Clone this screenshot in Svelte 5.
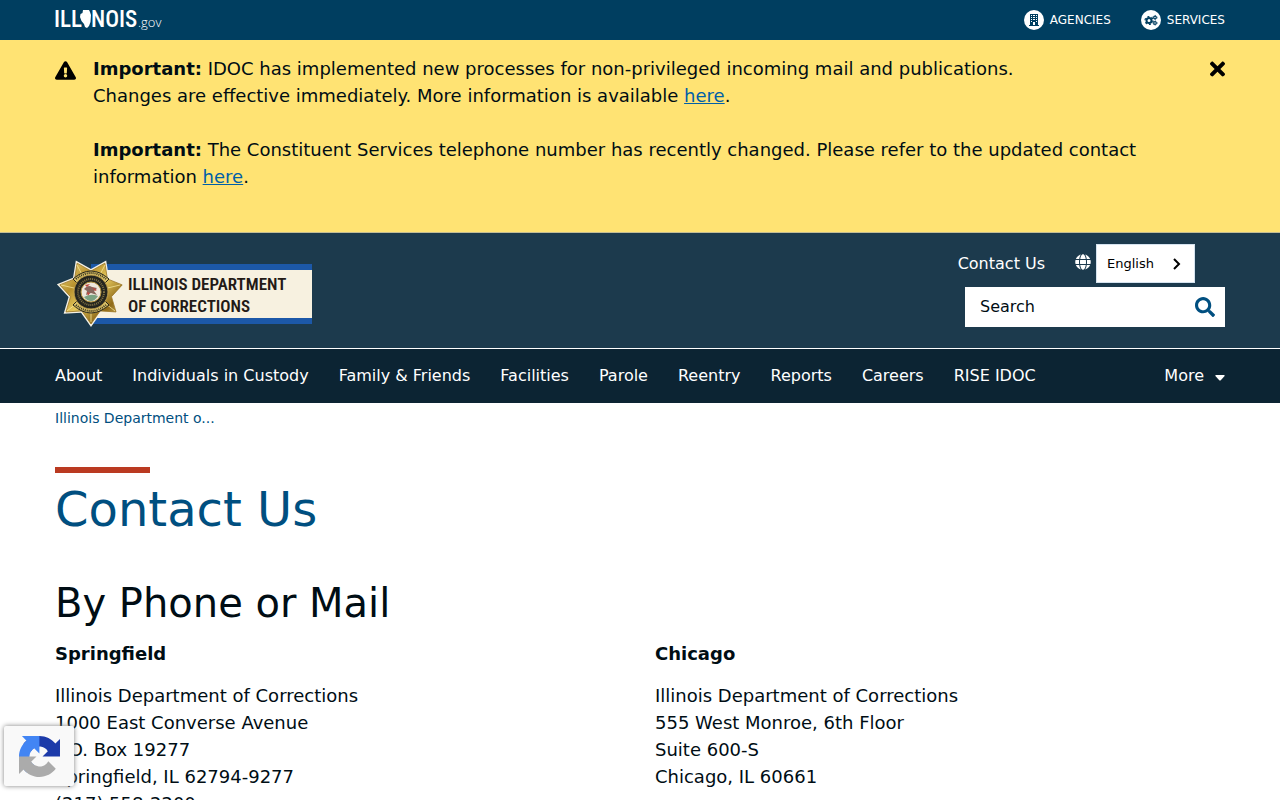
<script>
  let alertOpen = $state(true);
  let query = $state('');

  const navItems = [
    'About',
    'Individuals in Custody',
    'Family & Friends',
    'Facilities',
    'Parole',
    'Reentry',
    'Reports',
    'Careers',
    'RISE IDOC'
  ];

  const offices = [
    {
      city: 'Springfield',
      lines: [
        'Illinois Department of Corrections',
        '1000 East Converse Avenue',
        'P.O. Box 19277',
        'Springfield, IL 62794-9277',
        '(217) 558-2200'
      ]
    },
    {
      city: 'Chicago',
      lines: [
        'Illinois Department of Corrections',
        '555 West Monroe, 6th Floor',
        'Suite 600-S',
        'Chicago, IL 60661'
      ]
    }
  ];

  // seven-pointed sheriff's star around (36, 32)
  function starPoints(outer, inner) {
    const points = [];
    for (let i = 0; i < 14; i++) {
      const radius = i % 2 === 0 ? outer : inner;
      const angle = Math.PI / 2 + (i * Math.PI) / 7;
      points.push(`${36 + radius * Math.cos(angle)},${32 + radius * Math.sin(angle)}`);
    }
    return points.join(' ');
  }
</script>

<div class="topbar">
  <div class="container topbar-inner">
    <a class="state-logo" href="#illinois" aria-label="Illinois.gov">
      <svg width="110" height="30" viewBox="0 0 110 30" fill="#fff">
        <text class="state-name" x="-1" y="22">ILL</text>
        <path d="M28 5h6l1 2 1 3-.5 7-1.500 4-2 2-2-1-1-3-2.500-3-1.500-4 .500-3 2-1z" />
        <text class="state-name" x="36" y="22">NOIS</text>
        <text class="state-gov" x="83" y="22">.gov</text>
      </svg>
    </a>
    <div class="top-links">
      <a href="#agencies">
        <svg width="20" height="20" viewBox="0 0 20 20">
          <circle cx="10" cy="10" r="10" fill="#fff" />
          <path
            fill="#003e60"
            fill-rule="evenodd"
            d="M6 4h8v11h1v1H5v-1h1zM7 5v1h1V5zm2 0v1h2V5zm3 0v1h1V5zM7 7v1h1V7zm2 0v1h2V7zm3 0v1h1V7zM7 9v1h1V9zm2 0v1h2V9zm3 0v1h1V9zM7 11v1h1v-1zm5 0v1h1v-1zM9 12v3h2v-3z"
          />
        </svg>
        AGENCIES
      </a>
      <a href="#services">
        <svg width="20" height="20" viewBox="0 0 20 20">
          <circle cx="10" cy="10" r="10" fill="#fff" />
          <g fill="none" stroke="#003e60">
            <circle cx="8" cy="10.500" r="2.500" stroke-width="2" />
            <circle cx="8" cy="10.500" r="4" stroke-width="1.200" stroke-dasharray="2 2.190" />
            <circle cx="14" cy="7.500" r="1.300" stroke-width="1.200" />
            <circle cx="14" cy="7.500" r="2.100" stroke-width=".7" stroke-dasharray="1.100 1.100" />
            <circle cx="14" cy="13" r="1.300" stroke-width="1.200" />
            <circle cx="14" cy="13" r="2.100" stroke-width=".7" stroke-dasharray="1.100 1.100" />
          </g>
        </svg>
        SERVICES
      </a>
    </div>
  </div>
</div>

{#if alertOpen}
  <div class="alert" role="alert">
    <div class="container alert-inner">
      <svg class="alert-icon" width="21" height="19" viewBox="0 0 576 512">
        <path d="M569.517 440.013C587.975 472.007 564.806 512 527.94 512H48.054c-36.937 0-59.999-40.055-41.577-71.987L246.423 23.985c18.467-32.009 64.72-31.951 83.154 0l239.94 416.028zM288 354c-25.405 0-46 20.595-46 46s20.595 46 46 46 46-20.595 46-46-20.595-46-46-46zm-43.673-165.346l7.418 136c.347 6.364 5.609 11.346 11.982 11.346h48.546c6.373 0 11.635-4.982 11.982-11.346l7.418-136c.375-6.874-5.098-12.654-11.982-12.654h-63.383c-6.884 0-12.356 5.78-11.981 12.654z" />
      </svg>
      <div class="alert-text">
        <p>
          <strong>Important:</strong> IDOC has implemented new processes for non-privileged incoming mail and publications.<br />
          Changes are effective immediately. More information is available <a href="#mail">here</a>.
        </p>
        <p>
          <strong>Important:</strong> The Constituent Services telephone number has recently changed. Please refer to the updated contact
          information <a href="#phone">here</a>.
        </p>
      </div>
      <button class="alert-close" aria-label="Close alert" onclick={() => (alertOpen = false)}>
        <svg width="15" height="22" viewBox="0 0 352 512">
          <path d="M242.72 256l100.07-100.07c12.28-12.28 12.28-32.19 0-44.48l-22.24-22.24c-12.28-12.28-32.19-12.28-44.48 0L176 189.28 75.93 89.21c-12.28-12.28-32.19-12.28-44.48 0L9.21 111.45c-12.28 12.28-12.28 32.19 0 44.48L109.28 256 9.21 356.07c-12.28 12.28-12.28 32.19 0 44.48l22.24 22.24c12.28 12.28 32.2 12.28 44.48 0L176 322.72l100.07 100.07c12.28 12.28 32.2 12.28 44.48 0l22.24-22.24c12.28-12.28 12.28-32.19 0-44.48L242.72 256z" />
        </svg>
      </button>
    </div>
  </div>
{/if}

<header class="header">
  <div class="container header-inner">
    <a class="agency-logo" href="#home" aria-label="Illinois Department of Corrections">
      <svg width="257" height="68" viewBox="0 0 257 68">
        <defs>
          <linearGradient id="gold" x1="0" y1="0" x2="1" y2="1">
            <stop offset="0" stop-color="#f3e08a" />
            <stop offset=".3" stop-color="#b8912c" />
            <stop offset=".5" stop-color="#e6c95e" />
            <stop offset=".75" stop-color="#8f6a18" />
            <stop offset="1" stop-color="#e8d27a" />
          </linearGradient>
        </defs>
        <rect x="36" y="4" width="221" height="60" fill="#1c58a8" />
        <rect x="36" y="10" width="221" height="48" fill="#f7f1e0" />
        <polygon points={starPoints(35, 23)} fill="#f5f1e4" />
        <polygon points={starPoints(32, 21)} fill="url(#gold)" stroke="#9c7624" stroke-width=".8" />
        <g stroke="#fff0a6" stroke-width="1" opacity=".7">
          <path d="M36 32L22 5M36 32L50 5M36 32L6 25M36 32L65 25M36 32L12 51M36 32L60 51M36 32V62" />
        </g>
        <path d="M18 19Q36 3 54 19L50 23Q36 11 22 23z" fill="#d9c168" stroke="#28261b" />
        <path d="M18 45Q36 61 54 45L50 41Q36 53 22 41z" fill="#d9c168" stroke="#28261b" />
        <path d="M21 19Q36 7 51 19M21 45Q36 57 51 45" fill="none" stroke="#332d19" stroke-width="2" stroke-dasharray="1 1" />
        <circle cx="36" cy="32" r="17" fill="#24251f" stroke="#c0a04c" />
        <circle cx="36" cy="32" r="13" fill="none" stroke="#827344" stroke-width="2" stroke-dasharray="1 1" />
        <circle cx="36" cy="32" r="10" fill="#eee7dc" stroke="#b6953f" />
        <path d="M29 29q4-5 8-2l5 1-3 3 3 4-6-2-5 2 1-4z" fill="#86665d" />
        <path d="M30 25l5-1-3 3zM37 27l5 3-2 1zM32 32l3 1-2 3z" fill="#c4463e" />
        <path d="M29 37q7-4 14-1-3 5-7 5-4 0-7-4z" fill="#7ba283" />
        <text class="agency-name" x="73" y="30">ILLINOIS DEPARTMENT</text>
        <text class="agency-name" x="73" y="52">OF CORRECTIONS</text>
      </svg>
    </a>
    <div class="header-tools">
      <div class="header-links">
        <a href="#contact">Contact Us</a>
        <div class="language">
          <svg width="16" height="16" viewBox="0 0 496 512" fill="#fff">
            <path d="M336.5 160C322 70.7 287.8 8 248 8s-74 62.7-88.5 152h177zM152 256c0 22.2 1.2 43.5 3.3 64h185.3c2.1-20.5 3.3-41.8 3.3-64s-1.2-43.5-3.3-64H155.3c-2.1 20.5-3.3 41.8-3.3 64zm324.7-96c-28.6-67.9-86.5-120.4-158-141.6 24.4 33.8 41.2 84.7 50 141.6h108zM177.2 18.4C105.8 39.6 47.8 92.1 19.3 160h108c8.7-56.9 25.5-107.8 49.9-141.6zM487.4 192H372.7c2.1 21 3.3 42.5 3.3 64s-1.2 43-3.3 64h114.6c5.5-20.5 8.6-41.8 8.6-64s-3.1-43.5-8.5-64zM120 256c0-21.5 1.2-43 3.3-64H8.6C3.2 212.5 0 233.8 0 256s3.2 43.5 8.6 64h114.6c-2-21-3.2-42.5-3.2-64zm39.5 96c14.5 89.3 48.7 152 88.5 152s74-62.7 88.5-152h-177zm159.3 141.6c71.4-21.2 129.4-73.7 158-141.6h-108c-8.8 56.9-25.6 107.8-50 141.6zM19.3 352c28.6 67.9 86.5 120.4 158 141.6-24.4-33.8-41.2-84.7-50-141.6h-108z" />
          </svg>
          <button class="language-button">
            English
            <svg width="8" height="12" viewBox="0 0 8 12" fill="none" stroke="#000" stroke-width="2">
              <path d="M1 1l5 5-5 5" />
            </svg>
          </button>
        </div>
      </div>
      <form class="search" onsubmit={(event) => event.preventDefault()}>
        <input type="text" placeholder="Search" aria-label="Search" bind:value={query} />
        <button aria-label="Submit search">
          <svg width="20" height="20" viewBox="0 0 512 512" fill="#004f80">
            <path d="M505 442.7L405.3 343c-4.500-4.500-10.600-7-17-7H372c27.600-35.300 44-79.700 44-128C416 93.100 322.900 0 208 0S0 93.100 0 208s93.100 208 208 208c48.300 0 92.700-16.400 128-44v16.300c0 6.400 2.500 12.500 7 17l99.700 99.700c9.400 9.400 24.600 9.400 33.900 0l28.300-28.300c9.400-9.400 9.400-24.600.1-34zM208 336c-70.700 0-128-57.200-128-128 0-70.700 57.200-128 128-128 70.700 0 128 57.200 128 128 0 70.700-57.200 128-128 128z" />
          </svg>
        </button>
      </form>
    </div>
  </div>
</header>

<nav class="main-nav" aria-label="Main">
  <div class="container nav-inner">
    {#each navItems as item}
      <a href="#nav">{item}</a>
    {/each}
    <button class="more">
      More
      <svg width="10" height="6" viewBox="0 0 10 6" fill="#fff">
        <path d="M1 0h8q1 0 .6 1L6 5q-1 1-2 0L.4 1Q0 0 1 0z" />
      </svg>
    </button>
  </div>
</nav>

<main class="container">
  <div class="breadcrumb"><a href="#home">Illinois Department o...</a></div>
  <h1>Contact Us</h1>
  <h2>By Phone or Mail</h2>
  <div class="offices">
    {#each offices as office}
      <section>
        <h3>{office.city}</h3>
        <address>
          {#each office.lines as line}
            <div>{line}</div>
          {/each}
        </address>
      </section>
    {/each}
  </div>
</main>

<div class="captcha-badge">
  <svg width="41" height="41" viewBox="0 0 64 64">
    <path fill="#1c3aa9" d="M64 31.955l-.033-1.37V4.687l-7.16 7.16C50.948 4.674 42.033.093 32.05.093c-10.4 0-19.622 4.96-25.458 12.64l11.736 11.86a15.55 15.55 0 0 1 4.754-5.334c2.05-1.6 4.952-2.906 8.968-2.906.485 0 .86.057 1.135.163 4.976.393 9.288 3.14 11.828 7.124l-8.307 8.307L64 31.953" />
    <path fill="#4285f4" d="M31.862.094l-1.37.033H4.594l7.16 7.16C4.58 13.147 0 22.06 0 32.046c0 10.4 4.96 19.622 12.64 25.458L24.5 45.768a15.55 15.55 0 0 1-5.334-4.754c-1.6-2.05-2.906-4.952-2.906-8.968 0-.485.057-.86.163-1.135.393-4.976 3.14-9.288 7.124-11.828l8.307 8.307L31.86.095" />
    <path fill="#ababab" d="M.001 32.045l.033 1.37v25.898l7.16-7.16c5.86 7.173 14.774 11.754 24.76 11.754 10.4 0 19.622-4.96 25.458-12.64l-11.736-11.86a15.55 15.55 0 0 1-4.754 5.334c-2.05 1.6-4.952 2.906-8.968 2.906-.485 0-.86-.057-1.135-.163-4.976-.393-9.288-3.14-11.828-7.124l8.307-8.307c-10.522.04-22.4.066-27.295-.005" />
  </svg>
</div>

<style>
  :global(body) {
    margin: 0;
    background: #fff;
    color: #000d14;
    font-family: 'DejaVu Sans', sans-serif;
    font-size: 18px;
    line-height: 27px;
  }

  .container {
    box-sizing: border-box;
    width: 100%;
    max-width: 1200px;
    margin: 0 auto;
    padding: 0 15px;
  }

  svg {
    display: block;
    flex-shrink: 0;
  }

  button {
    padding: 0;
    border: 0;
    background: none;
    font-family: inherit;
    cursor: pointer;
  }

  .topbar {
    background: #003e60;
  }

  .topbar-inner {
    display: flex;
    align-items: center;
    justify-content: space-between;
    min-height: 40px;
  }

  .state-name {
    font-family: 'Roboto Condensed', 'Liberation Sans Narrow', 'Liberation Sans', sans-serif;
    font-size: 23px;
    font-weight: 500;
  }

  .state-gov {
    font-family: 'Open Sans', sans-serif;
    font-size: 13px;
    font-weight: 300;
  }

  .top-links {
    display: flex;
    gap: 30px;
  }

  .top-links a {
    display: flex;
    align-items: center;
    gap: 6px;
    color: #fff;
    font-size: 12px;
    line-height: 20px;
    text-decoration: none;
  }

  .alert {
    background: #ffe373;
    border-bottom: 1px solid #c4bd94;
  }

  .alert-inner {
    display: flex;
    align-items: flex-start;
    padding-top: 15px;
    padding-bottom: 15px;
  }

  .alert-icon {
    margin-top: 6px;
  }

  .alert-text {
    flex: 1;
    margin: 0 12px 0 17px;
  }

  .alert-text p {
    margin: 0 0 27px;
  }

  .alert-text a {
    color: #005fa8;
  }

  .alert-close {
    margin-top: 3px;
  }

  .header {
    background: #1c3a4d;
    border-bottom: 1px solid #fff;
  }

  .header-inner {
    display: flex;
    align-items: flex-start;
    justify-content: space-between;
    padding-top: 11px;
    padding-bottom: 20px;
  }

  .agency-logo {
    margin-top: 16px;
  }

  .agency-name {
    font-family: 'Roboto Condensed', 'Liberation Sans Narrow', 'Liberation Sans', sans-serif;
    font-size: 17px;
    font-weight: 600;
    fill: #231a16;
  }

  .header-tools {
    display: flex;
    flex-direction: column;
    align-items: flex-end;
    gap: 4px;
  }

  .header-links {
    display: flex;
    align-items: center;
    gap: 30px;
    margin-right: 30px;
  }

  .header-links a {
    color: #fff;
    font-size: 16px;
    text-decoration: none;
  }

  .language {
    display: flex;
    align-items: center;
    gap: 5px;
  }

  .language > svg {
    margin-bottom: 3px;
  }

  .language-button {
    display: flex;
    align-items: center;
    justify-content: space-between;
    gap: 19px;
    padding: 0 13px 0 10px;
    border: 1px solid #d5e3ef;
    background: #fff;
    color: #000;
    font-size: 13px;
    line-height: 37px;
  }

  .search {
    display: flex;
    width: 260px;
    background: #fff;
  }

  .search input {
    flex: 1;
    min-width: 0;
    padding: 0 15px;
    border: 0;
    background: none;
    font-family: inherit;
    font-size: 16px;
    line-height: 24px;
  }

  .search input::placeholder {
    color: #000d14;
    opacity: 1;
  }

  .search button {
    padding: 10px;
  }

  .main-nav {
    background: #0c2433;
  }

  .nav-inner {
    display: flex;
    align-items: center;
    gap: 30px;
    min-height: 54px;
  }

  .nav-inner a,
  .more {
    color: #fff;
    font-size: 16px;
    line-height: 24px;
    text-decoration: none;
    white-space: nowrap;
  }

  .more {
    display: flex;
    align-items: center;
    gap: 11px;
    margin-left: auto;
  }

  .more svg {
    margin-top: 4px;
  }

  .breadcrumb {
    padding-top: 5px;
    font-size: 14px;
    line-height: 21px;
  }

  .breadcrumb a {
    color: #004f80;
    text-decoration: none;
  }

  h1 {
    margin: 38px 0 0;
    color: #004f80;
    font-size: 48px;
    font-weight: normal;
    line-height: 58px;
  }

  h1::before {
    content: '';
    display: block;
    width: 95px;
    height: 6px;
    margin-bottom: 7px;
    background: #ba3a21;
  }

  h2 {
    margin: 41px 0 13px;
    font-size: 40px;
    font-weight: normal;
    line-height: 48px;
  }

  .offices {
    display: grid;
    grid-template-columns: 1fr 1fr;
    gap: 30px;
  }

  h3 {
    margin: 0 0 15px;
    font-size: 18px;
    font-weight: bold;
    line-height: 27px;
  }

  address {
    font-style: normal;
  }

  .captcha-badge {
    position: fixed;
    bottom: 14px;
    left: 4px;
    display: flex;
    align-items: center;
    justify-content: center;
    width: 70px;
    height: 60px;
    border-radius: 2px;
    background: #f9f9f9;
    box-shadow: 0 0 5px #808080;
  }
</style>
